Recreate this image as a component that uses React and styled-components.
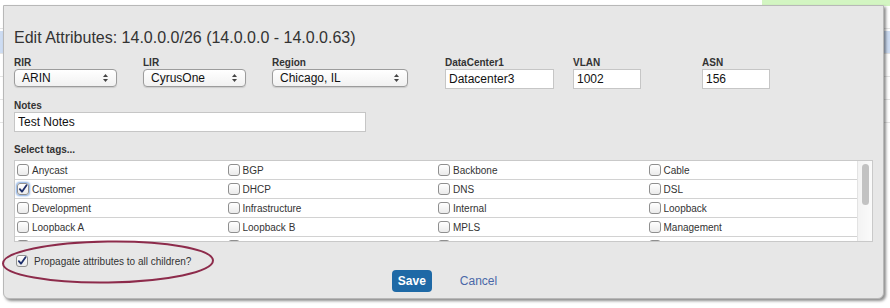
import styled, { createGlobalStyle } from 'styled-components';

const GlobalStyle = createGlobalStyle`
  html, body {
    margin: 0;
    padding: 0;
    background: #ffffff;
  }
  body {
    font-family: "Liberation Sans", Arial, Helvetica, sans-serif;
    color: #333;
  }
`;

const tags = [
  ['Anycast', false], ['BGP', false], ['Backbone', false], ['Cable', false],
  ['Customer', true], ['DHCP', false], ['DNS', false], ['DSL', false],
  ['Development', false], ['Infrastructure', false], ['Internal', false], ['Loopback', false],
  ['Loopback A', false], ['Loopback B', false], ['MPLS', false], ['Management', false],
  ['Multicast', false], ['Peering', false], ['Private', false], ['Public', false],
];

const App = () => {
  const rows = [];
  for (let i = 0; i < tags.length; i += 4) rows.push(tags.slice(i, i + 4));

  return (
    <Page>
      <GlobalStyle />
      <Behind>
        <TopStrip>
          <GreenCell />
        </TopStrip>
        <BgRow />
        <BgRow $active />
        <BgRow />
        <BgRow />
        <BgRow />
      </Behind>

      <Dialog>
        <Title>Edit Attributes: 14.0.0.0/26 (14.0.0.0 - 14.0.0.63)</Title>

        <FieldRow>
          <Field $w={129}>
            <Label>RIR</Label>
            <Select $w={103} value="ARIN" />
          </Field>
          <Field $w={129}>
            <Label>LIR</Label>
            <Select $w={103} value="CyrusOne" />
          </Field>
          <Field $w={173}>
            <Label>Region</Label>
            <Select $w={136} value="Chicago, IL" />
          </Field>
          <Field $w={128}>
            <Label>DataCenter1</Label>
            <TextInput $w={109} defaultValue="Datacenter3" />
          </Field>
          <Field $w={129}>
            <Label>VLAN</Label>
            <TextInput $w={68} defaultValue="1002" />
          </Field>
          <Field $w={120}>
            <Label>ASN</Label>
            <TextInput $w={68} defaultValue="156" />
          </Field>
        </FieldRow>

        <NotesBlock>
          <Label>Notes</Label>
          <TextInput $w={352} defaultValue="Test Notes" />
        </NotesBlock>

        <SectionLabel>Select tags...</SectionLabel>
        <TagBox>
          <TagList>
            {rows.map((row, i) => (
              <TagRow key={i}>
                {row.map(([name, checked]) => (
                  <TagCell key={name}>
                    <Check checked={checked} glow={checked} />
                    <span>{name}</span>
                  </TagCell>
                ))}
              </TagRow>
            ))}
          </TagList>
          <ScrollTrack>
            <ScrollThumb />
          </ScrollTrack>
        </TagBox>

        <PropagateRow>
          <Check checked />
          <span>Propagate attributes to all children?</span>
        </PropagateRow>

        <Footer>
          <SaveButton>Save</SaveButton>
          <CancelLink>Cancel</CancelLink>
        </Footer>
      </Dialog>

      <Annotation width="218" height="50" viewBox="0 0 218 50">
        <ellipse cx="108" cy="24" rx="105" ry="20.5" fill="none" stroke="#8d2b4b" strokeWidth="2" transform="rotate(-0.8 108 24)" />
      </Annotation>
    </Page>
  );
};

const Select = ({ value, $w }) => (
  <SelectBox $w={$w}>
    <span>{value}</span>
    <svg width="7" height="10" viewBox="0 0 7 10">
      <path d="M1 4 L3.5 1 L6 4 Z" fill="#444" />
      <path d="M1 6 L3.5 9 L6 6 Z" fill="#444" />
    </svg>
  </SelectBox>
);

const Check = ({ checked, glow }) => (
  <CheckBox $glow={glow}>
    {checked && (
      <svg width="12" height="12" viewBox="0 0 12 12">
        <path d="M2.2 6.2 L4.8 9.2 L10.2 1.6" fill="none" stroke="#1e2f6b" strokeWidth="2.2" strokeLinecap="round" strokeLinejoin="round" />
      </svg>
    )}
  </CheckBox>
);

//styled-components
const Page = styled.div`
  position: relative;
  width: 890px;
  height: 308px;
  overflow: hidden;
`;

const Behind = styled.div`
  display: flex;
  flex-direction: column;
`;

const TopStrip = styled.div`
  height: 6px;
  display: flex;
  justify-content: flex-end;
`;

const GreenCell = styled.div`
  width: 128px;
  background: #d3f5c2;
`;

const BgRow = styled.div`
  height: 22px;
  border-bottom: 1px solid #e4e4e4;
  background: ${p => (p.$active ? '#cddcf2' : '#fff')};
  margin-top: ${p => (p.$active ? '2px' : '0')};
`;

const Dialog = styled.div`
  position: absolute;
  left: 3px;
  top: 5px;
  width: 881px;
  height: 294px;
  box-sizing: border-box;
  background: #e7e7e7;
  border: 1px solid #b8b8b8;
  border-radius: 0 0 6px 6px;
  box-shadow: 2px 2px 3px rgba(0, 0, 0, 0.45);
  padding: 0 10px;
  display: flex;
  flex-direction: column;
`;

const Title = styled.h1`
  margin: 23px 0 0;
  font-size: 16px;
  line-height: 18px;
  font-weight: normal;
  color: #333;
`;

const FieldRow = styled.div`
  display: flex;
  margin-top: 10px;
`;

const Field = styled.div`
  width: ${p => p.$w}px;
  display: flex;
  flex-direction: column;
  align-items: flex-start;
`;

const Label = styled.div`
  font-size: 10px;
  line-height: 12px;
  font-weight: bold;
  color: #333;
`;

const SelectBox = styled.div`
  width: ${p => p.$w}px;
  height: 18px;
  box-sizing: border-box;
  border: 1px solid #9c9c9c;
  border-radius: 4px;
  background: linear-gradient(#ffffff, #f1f1f1);
  box-shadow: 0 1px 1px rgba(0, 0, 0, 0.12);
  display: flex;
  align-items: center;
  justify-content: space-between;
  padding: 0 7px 0 7px;
  font-size: 12px;
  color: #111;
`;

const TextInput = styled.input`
  width: ${p => p.$w}px;
  height: 20px;
  box-sizing: border-box;
  border: 1px solid #c6c6c6;
  background: #fff;
  margin: 0;
  padding: 0 3px;
  font-family: "Liberation Sans", Arial, sans-serif;
  font-size: 12px;
  color: #111;
  outline: none;
`;

const NotesBlock = styled.div`
  display: flex;
  flex-direction: column;
  align-items: flex-start;
  margin-top: 11px;
`;

const SectionLabel = styled(Label)`
  margin-top: 12px;
`;

const TagBox = styled.div`
  margin-top: 4px;
  display: flex;
  border: 1px solid #c9c9c9;
  background: #fff;
`;

const TagList = styled.div`
  flex: 1;
  height: 80px;
  overflow: hidden;
`;

const TagRow = styled.div`
  display: grid;
  grid-template-columns: repeat(4, 1fr);
  height: 18px;
  border-bottom: 1px solid #d2d2d2;
`;

const TagCell = styled.label`
  display: flex;
  align-items: center;
  gap: 3px;
  padding-left: 2px;
  font-size: 10px;
  color: #333;
`;

const CheckBox = styled.span`
  width: 12px;
  height: 12px;
  box-sizing: border-box;
  border: 1px solid #8f8f8f;
  border-radius: 3px;
  background: linear-gradient(#ffffff, #ebebeb);
  display: inline-flex;
  align-items: center;
  justify-content: center;
  flex-shrink: 0;
  box-shadow: ${p => (p.$glow ? '0 0 2px 1px #7ea9e4' : 'none')};
  svg {
    margin-top: -1px;
  }
`;

const ScrollTrack = styled.div`
  width: 15px;
  border-left: 1px solid #e3e3e3;
  background: linear-gradient(to right, #f3f3f3, #fafafa);
  display: flex;
  justify-content: center;
  padding-top: 3px;
  box-sizing: border-box;
`;

const ScrollThumb = styled.div`
  width: 7px;
  height: 41px;
  border-radius: 4px;
  background: #c2c2c2;
`;

const PropagateRow = styled.label`
  display: flex;
  align-items: center;
  gap: 6px;
  margin-top: 12px;
  padding-left: 2px;
  height: 14px;
  font-size: 10px;
  color: #333;
`;

const Footer = styled.div`
  display: flex;
  justify-content: center;
  align-items: center;
  gap: 28px;
  margin-top: 2px;
  padding-left: 2px;
`;

const SaveButton = styled.button`
  width: 40px;
  height: 22px;
  border: none;
  border-radius: 4px;
  background: #1e69a6;
  color: #fff;
  font-family: "Liberation Sans", Arial, sans-serif;
  font-weight: bold;
  font-size: 12px;
  padding: 0;
`;

const CancelLink = styled.span`
  font-size: 12px;
  color: #4a68a8;
`;

const Annotation = styled.svg`
  position: absolute;
  left: 0;
  top: 238px;
`;

export default App;
